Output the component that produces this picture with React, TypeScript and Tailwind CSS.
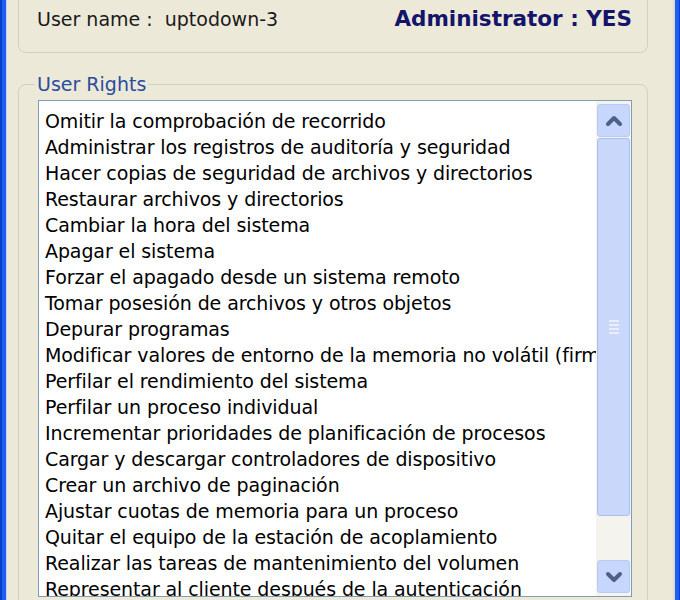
import { ChevronDown, ChevronUp } from 'lucide-react'

const RIGHTS = [
  'Omitir la comprobación de recorrido',
  'Administrar los registros de auditoría y seguridad',
  'Hacer copias de seguridad de archivos y directorios',
  'Restaurar archivos y directorios',
  'Cambiar la hora del sistema',
  'Apagar el sistema',
  'Forzar el apagado desde un sistema remoto',
  'Tomar posesión de archivos y otros objetos',
  'Depurar programas',
  'Modificar valores de entorno de la memoria no volátil (firmware)',
  'Perfilar el rendimiento del sistema',
  'Perfilar un proceso individual',
  'Incrementar prioridades de planificación de procesos',
  'Cargar y descargar controladores de dispositivo',
  'Crear un archivo de paginación',
  'Ajustar cuotas de memoria para un proceso',
  'Quitar el equipo de la estación de acoplamiento',
  'Realizar las tareas de mantenimiento del volumen',
  'Representar al cliente después de la autenticación',
  'Crear objetos globales',
]

const font = { fontFamily: '"DejaVu Sans", Verdana, sans-serif' }

function ScrollButton({ up }: { up?: boolean }) {
  const Icon = up ? ChevronUp : ChevronDown
  return (
    <div className="h-[33px] shrink-0 rounded-[3px] border border-[#b9cbf3] bg-[#c6d6fc] flex items-center justify-center">
      <Icon size={24} strokeWidth={4} className="text-[#4d6185]" />
    </div>
  )
}

function Scrollbar() {
  return (
    <div className="w-[35px] shrink-0 bg-[#f4f3ee] flex flex-col px-px py-[3px] gap-px">
      <ScrollButton up />
      <div className="h-[378px] shrink-0 rounded-[3px] border border-[#a8bfef] bg-[#c9d7fb] flex items-center justify-center">
        <div className="flex flex-col gap-[2px]">
          <span className="block w-[10px] h-[2px] bg-[#e8eefd]" />
          <span className="block w-[10px] h-[2px] bg-[#e8eefd]" />
          <span className="block w-[10px] h-[2px] bg-[#e8eefd]" />
          <span className="block w-[10px] h-[2px] bg-[#e8eefd]" />
        </div>
      </div>
      <div className="flex-1" />
      <ScrollButton />
    </div>
  )
}

export default function App() {
  return (
    <div className="w-[680px] h-[600px] overflow-hidden flex bg-[#ece9d8]" style={font}>
      {/* window frame, left */}
      <div className="w-[7px] shrink-0 flex">
        <div className="w-[2px] bg-[#0a3fc8]" />
        <div className="w-[4px] bg-[#1c5ff2]" />
        <div className="w-px bg-[#c7d3ee]" />
      </div>

      <div className="flex-1 min-w-0 flex flex-col pl-[11px] pr-[25px]">
        {/* account summary */}
        <div className="-mt-[20px] h-[73px] shrink-0 rounded-[8px] border border-[#d3d0c0] flex items-end justify-between pl-[18px] pr-[15px] pb-[21px]">
          <span className="text-[19px] leading-[24px] text-[#1a1a1a]">User name :&nbsp; uptodown-3</span>
          <span className="text-[21.5px] leading-[24px] font-bold text-[#14146b]">Administrator : YES</span>
        </div>

        {/* rights list */}
        <fieldset className="mt-[21px] shrink-0 min-w-0 rounded-[8px] border border-[#d3d0c0] pl-[19px] pr-[15px] pt-[7px] pb-[16px]">
          <legend className="-ml-[3px] -mb-px px-[2px] text-[19px] text-[#2a4c9d] leading-[20px]">User Rights</legend>
          <div className="h-[497px] flex border border-[#7f9db9] bg-white">
            <ul className="flex-1 min-w-0 overflow-hidden pl-[6px] pt-[7px]">
              {RIGHTS.map((r) => (
                <li key={r} className="h-[26px] leading-[26px] whitespace-nowrap text-[19px] text-black tracking-[-0.1px]">
                  {r}
                </li>
              ))}
            </ul>
            <Scrollbar />
          </div>
        </fieldset>
      </div>

      {/* window frame, right */}
      <div className="w-[7px] shrink-0 flex">
        <div className="w-[2px] bg-[#dcdaca]" />
        <div className="w-[4px] bg-[#1c5ff2]" />
        <div className="w-px bg-[#0a3fc8]" />
      </div>
    </div>
  )
}
